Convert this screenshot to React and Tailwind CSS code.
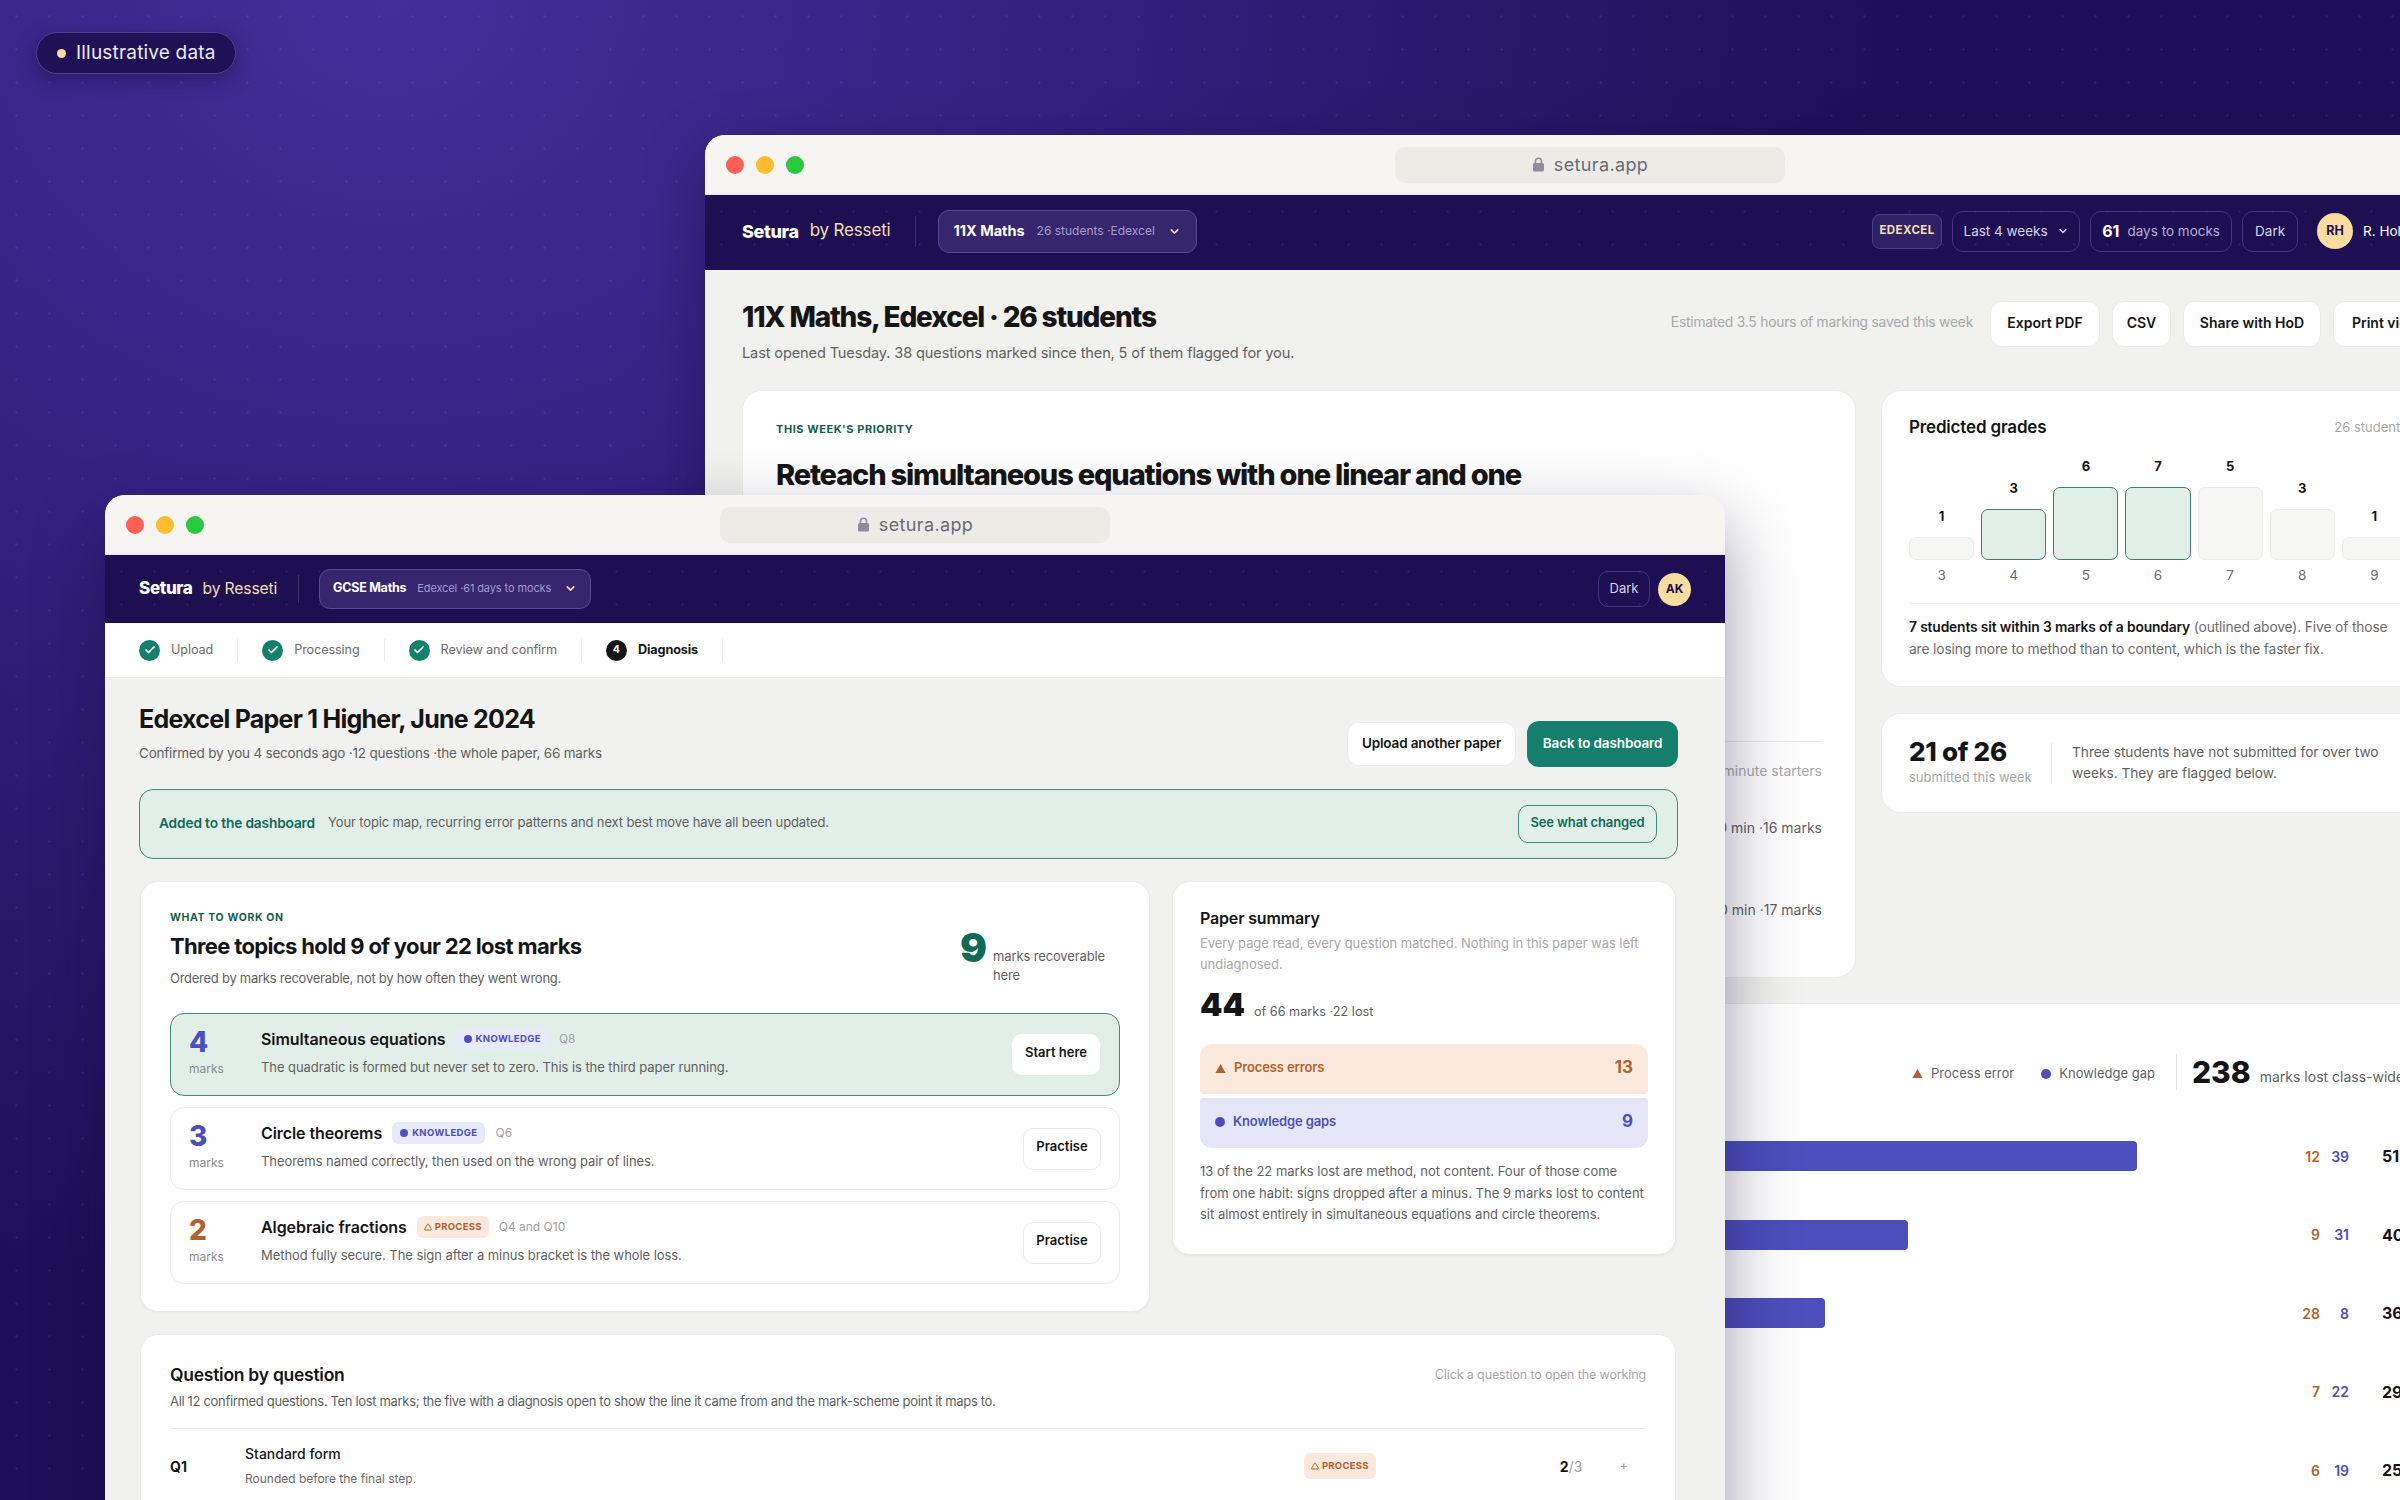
import { Check, ChevronDown, Triangle } from "lucide-react";

const grades = [
  { grade: 3, count: 1, h: "h-[23px]" },
  { grade: 4, count: 3, h: "h-[51px]", near: true },
  { grade: 5, count: 6, h: "h-[73px]", near: true },
  { grade: 6, count: 7, h: "h-[73px]", near: true },
  { grade: 7, count: 5, h: "h-[73px]" },
  { grade: 8, count: 3, h: "h-[51px]" },
  { grade: 9, count: 1, h: "h-[23px]" },
];

const lostRows = [
  { topic: "Simultaneous equations", process: 12, knowledge: 39 },
  { topic: "Circle theorems", process: 9, knowledge: 31 },
  { topic: "Algebraic fractions", process: 28, knowledge: 8 },
  { topic: "Vectors", process: 7, knowledge: 22 },
  { topic: "Standard form", process: 6, knowledge: 19 },
];

const actions = [
  { label: "Export PDF", w: "w-[110px]" },
  { label: "CSV", w: "w-[59px]" },
  { label: "Share with HoD", w: "w-[138px]" },
  { label: "Print view", w: "w-[105px]" },
];

const dots =
  "bg-[radial-gradient(rgba(255,255,255,0.06)_1px,transparent_1.5px)] bg-[size:33px_33px]";

function Lock() {
  return (
    <svg width="13" height="15" viewBox="0 0 13 15" className="shrink-0">
      <path d="M3.5 6.5V4.2a3 3 0 0 1 6 0v2.3" fill="none" stroke="#8f8d9b" strokeWidth="1.6" />
      <rect x="1" y="6" width="11" height="8.5" rx="1.6" fill="#8f8d9b" />
    </svg>
  );
}

function TitleBar() {
  return (
    <div className="relative flex h-[60px] items-center justify-center bg-[#f6f5f2] border-b border-[#e4e1ee]">
      <div className="absolute left-[21px] flex gap-[12px]">
        <span className="h-[18px] w-[18px] rounded-full bg-[#ff5f57]" />
        <span className="h-[18px] w-[18px] rounded-full bg-[#febc2e]" />
        <span className="h-[18px] w-[18px] rounded-full bg-[#28c840]" />
      </div>
      <div className="flex h-[36px] w-[390px] items-center justify-center gap-[9px] rounded-[10px] bg-[#ecebe6] text-[18px] tracking-[0.02em] text-[#6b6a75]">
        <Lock />
        <span>setura.app</span>
      </div>
    </div>
  );
}

function Triangular({ size = 12 }) {
  return (
    <svg width={size} height={size} viewBox="0 0 12 12" className="shrink-0">
      <path d="M6 1 11.5 11H.5Z" fill="#b3612c" />
    </svg>
  );
}

function KnowledgeBadge() {
  return (
    <span className="flex h-[22px] items-center gap-[4px] rounded-[6px] bg-[#e8e9fa] px-[8px] text-[9.5px] font-bold tracking-[0.04em] text-[#4c4fbb]">
      <span className="h-[8px] w-[8px] rounded-full bg-[#4c4fbb]" />
      KNOWLEDGE
    </span>
  );
}

function ProcessBadge({ className = "h-[22px]" }) {
  return (
    <span className={`flex items-center gap-[3px] rounded-[6px] bg-[#fbe9dd] px-[7px] text-[9.5px] font-bold tracking-[0.03em] text-[#b3612c] ${className}`}>
      <Triangle size={8} strokeWidth={3} />
      PROCESS
    </span>
  );
}

function BackWindow() {
  return (
    <div className="absolute left-[705px] top-[135px] h-[1400px] w-[1770px] overflow-hidden rounded-[20px] bg-[#f1f1ee] shadow-[0_20px_60px_rgba(10,5,40,0.35)]">
      <TitleBar />

      {/* Nav */}
      <div className={`flex h-[75px] items-center bg-[#1e0f52] px-[37px] pb-[3px] ${dots}`}>
        <span className="text-[18px] font-extrabold tracking-[-0.02em] text-white">Setura</span>
        <span className="ml-[11px] text-[17px] tracking-[-0.01em] text-[#f5deb3]">by Resseti</span>
        <span className="ml-[24px] h-[31px] w-px bg-white/15" />
        <button className="ml-[22px] flex h-[43px] w-[259px] items-center whitespace-nowrap rounded-[11px] border border-[#5a4a96] bg-[#35266e] px-[15px]">
          <span className="text-[14.5px] font-bold text-white">11X Maths</span>
          <span className="ml-[12px] text-[12px] text-[#a59cc9]">26 students ·Edexcel</span>
          <ChevronDown size={13} strokeWidth={3} className="ml-auto shrink-0 text-[#f5deb3]" />
        </button>
        <div className="ml-auto flex items-center gap-[10px]">
          <span className="flex h-[35px] w-[70px] items-center justify-center rounded-[8px] border border-[#4d3f8a] bg-[#2f2166] text-[11.5px] font-bold tracking-[0.04em] text-[#f5deb3]">
            EDEXCEL
          </span>
          <span className="flex h-[41px] w-[128px] items-center justify-center gap-[9px] rounded-[11px] border border-[#43357f] text-[13.5px] text-[#d8d3ea]">
            Last 4 weeks <ChevronDown size={12} strokeWidth={2.5} />
          </span>
          <span className="flex h-[41px] w-[142px] items-center justify-center gap-[8px] rounded-[11px] border border-[#43357f] text-[13.5px] text-[#b5aed4]">
            <b className="text-[16px] font-bold text-white">61</b> days to mocks
          </span>
          <span className="flex h-[41px] w-[56px] items-center justify-center rounded-[11px] border border-[#43357f] text-[13.5px] text-[#d8d3ea]">
            Dark
          </span>
          <span className="ml-[9px] flex h-[36px] w-[36px] items-center justify-center rounded-full bg-[#f8dca0] text-[12.5px] font-bold text-[#1e0f52]">
            RH
          </span>
          <span className="whitespace-nowrap text-[13.5px] text-white">R. Holloway</span>
        </div>
      </div>

      {/* Page */}
      <div className="px-[37px] pt-[28px]">
        <div className="flex items-start justify-between">
          <div>
            <h1 className="text-[28px] font-extrabold leading-[38px] tracking-[-0.042em] text-[#151515]">
              11X Maths, Edexcel · 26 students
            </h1>
            <p className="mt-[6px] text-[14.6px] leading-[22px] tracking-[-0.01em] text-[#5f5f5f]">
              Last opened Tuesday. 38 questions marked since then, 5 of them flagged for you.
            </p>
          </div>
          <div className="mt-[3px] flex items-center gap-[12px]">
            <span className="mb-[4px] mr-[5px] text-[13.8px] tracking-[-0.015em] text-[#a8a8a8]">
              Estimated 3.5 hours of marking saved this week
            </span>
            {actions.map((a) => (
              <button key={a.label} className={`h-[46px] rounded-[12px] border border-[#ebebe8] bg-white pb-[3px] text-[14px] font-semibold text-[#151515] ${a.w}`}>
                {a.label}
              </button>
            ))}
          </div>
        </div>

        <div className="mt-[26px] flex gap-[25px]">
          <div className="flex h-[588px] w-[1114px] flex-col rounded-[20px] border border-[#ebebe8] bg-white px-[33px] pb-[30px] pt-[30px]">
            <div className="text-[11px] font-bold tracking-[0.05em] text-[#155e4f]">THIS WEEK'S PRIORITY</div>
            <h2 className="mt-[17px] text-[29px] font-extrabold leading-[40px] tracking-[-0.04em] text-[#151515]">
              Reteach simultaneous equations with one linear and one
            </h2>
            <div className="mt-auto border-t border-[#ebebe8] pt-[18px] text-right text-[14px] text-[#5f5f5f]">
              <div className="text-[#a8a8a8]">Three 10-minute starters</div>
              <div className="mt-[36px]">50 min ·16 marks</div>
              <div className="mt-[61px] mb-[27px]">50 min ·17 marks</div>
            </div>
          </div>

          <div className="flex w-[554px] flex-col gap-[26px]">
            <div className="h-[297px] rounded-[20px] border border-[#ebebe8] bg-white px-[27px] pt-[24px]">
              <div className="flex items-center justify-between">
                <span className="text-[17px] font-semibold tracking-[-0.01em] text-[#151515]">Predicted grades</span>
                <span className="text-[13px] text-[#a8a8a8]">26 students</span>
              </div>
              <div className="mt-[17px] flex h-[102px] items-end gap-[7px]">
                {grades.map((g) => (
                  <div key={g.grade} className="flex w-[65.2px] flex-col items-center">
                    <span className="mb-[13px] text-[13px] font-bold leading-[16px] text-[#151515]">{g.count}</span>
                    <div className={`w-full rounded-[7px] border ${g.h} ${g.near ? "border-[#3d7f6e] bg-[#e2efe9]" : "border-[#ebebe8] bg-[#f6f6f4]"}`} />
                  </div>
                ))}
              </div>
              <div className="mt-[6px] flex gap-[7px]">
                {grades.map((g) => (
                  <span key={g.grade} className="w-[65.2px] text-center text-[13.5px] leading-[18px] text-[#6b6b6b]">{g.grade}</span>
                ))}
              </div>
              <p className="mt-[19px] border-t border-[#eeeeec] pr-[8px] pt-[12px] text-[13.8px] leading-[22px] tracking-[-0.01em] text-[#6b6b6b]">
                <b className="font-semibold text-[#151515]">7 students sit within 3 marks of a boundary</b> (outlined above). Five of those are losing more to method than to content, which is the faster fix.
              </p>
            </div>
            <div className="flex h-[100px] items-center rounded-[20px] border border-[#ebebe8] bg-white px-[27px]">
              <div className="w-[142px] pb-[3px]">
                <div className="text-[26px] font-extrabold leading-[30px] tracking-[-0.01em] text-[#151515]">21 of 26</div>
                <div className="text-[13px] leading-[20px] text-[#a8a8a8]">submitted this week</div>
              </div>
              <span className="h-[40px] w-px bg-[#e6e6e3]" />
              <p className="ml-[20px] w-[320px] text-[13.7px] leading-[21px] text-[#5f5f5f]">
                Three students have not submitted for over two weeks. They are flagged below.
              </p>
            </div>
          </div>
        </div>

        {/* Marks lost */}
        <div className="mt-[25px] h-[520px] rounded-[20px] border border-[#ebebe8] bg-white px-[28px] pt-[50px]">
          <div className="flex h-[36px] items-center whitespace-nowrap">
            <span className="ml-[1141px] mt-[3px] flex items-center gap-[8px] text-[13px] text-[#5f5f5f]">
              <Triangular size={11} /> Process error
            </span>
            <span className="ml-[27px] mt-[3px] flex items-center gap-[8px] text-[13px] text-[#5f5f5f]">
              <span className="h-[10px] w-[10px] rounded-full bg-[#4c4fbb]" /> Knowledge gap
            </span>
            <span className="ml-[21px] h-[36px] w-px bg-[#e6e6e3]" />
            <span className="ml-[15px] text-[30px] font-extrabold text-[#151515]">238</span>
            <span className="ml-[9px] mt-[8px] text-[14px] text-[#5f5f5f]">marks lost class-wide</span>
          </div>
          <div className="mt-[51px] flex flex-col gap-[48.5px]">
            {lostRows.map((row) => (
              <div key={row.topic} className="flex h-[30px] items-center">
                <span className="w-[305px] text-[14px] font-semibold text-[#151515]">{row.topic}</span>
                <div className="flex h-[30px] w-[1204px]">
                  <div className="rounded-l-[4px] bg-[#b3612c]" style={{ width: row.process * 20.8 }} />
                  <div className="rounded-r-[4px] bg-[#4c4fbb]" style={{ width: row.knowledge * 20.8 }} />
                </div>
                <span className="w-[40px] text-right text-[14px] font-semibold text-[#b3612c]">{row.process}</span>
                <span className="w-[29px] text-right text-[14px] font-semibold text-[#4c4fbb]">{row.knowledge}</span>
                <span className="ml-[33px] w-[26px] text-[16px] font-bold text-[#151515]">{row.process + row.knowledge}</span>
              </div>
            ))}
          </div>
        </div>
      </div>
    </div>
  );
}

function Step({ label, n, active }) {
  return (
    <div className="flex h-[22px] items-center border-r border-[#ebebe8] px-[24px] first:pl-0">
      {active ? (
        <span className="flex h-[21px] w-[21px] items-center justify-center rounded-full bg-[#151515] text-[10.5px] font-bold text-white">{n}</span>
      ) : (
        <span className="flex h-[21px] w-[21px] items-center justify-center rounded-full bg-[#14806c] text-white">
          <Check size={12} strokeWidth={3.5} />
        </span>
      )}
      <span className={`ml-[11px] mb-[1px] text-[12.7px] tracking-[-0.01em] ${active ? "font-bold text-[#151515]" : "text-[#6b6b6b]"}`}>{label}</span>
    </div>
  );
}

function TopicRow({ marks, colour, title, badge, ref_, desc, button, primary }) {
  return (
    <div className={`flex h-[83px] rounded-[14px] border pl-[18px] pr-[18px] ${primary ? "border-[#3d8b7d] bg-[#e2efe9]" : "border-[#ebebe8] bg-white"}`}>
      <div className="w-[72px] pt-[12px]">
        <div className={`text-[28px] font-extrabold leading-[32px] ${colour}`}>{marks}</div>
        <div className="mt-[3px] text-[12px] leading-[16px] text-[#8a8a8a]">marks</div>
      </div>
      <div className="pt-[13px]">
        <div className="flex h-[24px] items-center gap-[10px]">
          <span className="text-[16px] font-semibold tracking-[-0.005em] text-[#151515]">{title}</span>
          {badge}
          <span className="text-[12px] text-[#a0a0a0]">{ref_}</span>
        </div>
        <p className="mt-[6px] text-[13px] leading-[20px] tracking-[-0.005em] text-[#5f5f5f]">{desc}</p>
      </div>
      <button className={`ml-auto self-center rounded-[10px] bg-white pb-[3px] text-[13px] font-semibold text-[#151515] ${primary ? "mr-[1px] h-[41px] w-[88px]" : "h-[42px] w-[78px] border border-[#ebebe8]"}`}>
        {button}
      </button>
    </div>
  );
}

function FrontWindow() {
  return (
    <div className="absolute left-[105px] top-[495px] h-[1100px] w-[1620px] overflow-hidden rounded-[20px] bg-[#f1f1ef] shadow-[0_30px_70px_rgba(15,10,50,0.42)]">
      <TitleBar />

      <div className={`flex h-[68px] items-center bg-[#1e0f52] pl-[34px] pr-[34px] ${dots}`}>
        <span className="text-[17px] font-extrabold tracking-[-0.02em] text-white">Setura</span>
        <span className="ml-[10px] text-[15.7px] tracking-[-0.01em] text-[#f5deb3]">by Resseti</span>
        <span className="ml-[21px] h-[28px] w-px bg-white/15" />
        <button className="ml-[20px] flex h-[40px] w-[272px] items-center whitespace-nowrap rounded-[11px] border border-[#5a4a96] bg-[#35266e] px-[13px] pb-[1px]">
          <span className="text-[12.5px] font-bold tracking-[-0.02em] text-white">GCSE Maths</span>
          <span className="ml-[11px] text-[11px] tracking-[-0.01em] text-[#a59cc9]">Edexcel ·61 days to mocks</span>
          <ChevronDown size={13} strokeWidth={3} className="ml-auto shrink-0 text-[#f5deb3]" />
        </button>
        <span className="ml-auto flex h-[36px] w-[52px] items-center justify-center rounded-[10px] border border-[#43357f] text-[13px] text-[#d8d3ea]">
          Dark
        </span>
        <span className="ml-[8px] flex h-[33px] w-[33px] items-center justify-center rounded-full bg-[#f8dca0] text-[12px] font-bold text-[#1e0f52]">
          AK
        </span>
      </div>

      <div className="flex h-[55px] items-center border-b border-[#ebebe8] bg-white pl-[34px]">
        <Step label="Upload" />
        <Step label="Processing" />
        <Step label="Review and confirm" />
        <Step label="Diagnosis" n="4" active />
      </div>

      <div className="pl-[34px] pr-[47px] pt-[23px]">
        <div className="flex items-end justify-between">
          <div className="pb-[4px]">
            <h1 className="text-[25px] font-bold leading-[36px] tracking-[-0.03em] text-[#151515]">
              Edexcel Paper 1 Higher, June 2024
            </h1>
            <p className="mt-[6px] text-[13.5px] leading-[20px] tracking-[-0.015em] text-[#5f5f5f]">
              Confirmed by you 4 seconds ago ·12 questions ·the whole paper, 66 marks
            </p>
          </div>
          <div className="flex items-center gap-[11px]">
            <button className="h-[44px] w-[169px] rounded-[12px] border border-[#ebebe8] bg-white pb-[2px] text-[13.5px] font-semibold tracking-[-0.01em] text-[#151515]">
              Upload another paper
            </button>
            <button className="h-[46px] w-[151px] rounded-[12px] bg-[#14806c] pb-[2px] text-[13.5px] font-semibold tracking-[-0.01em] text-white">
              Back to dashboard
            </button>
          </div>
        </div>

        <div className="mt-[22px] flex h-[70px] items-center rounded-[14px] border border-[#3d8b7d] bg-[#e2efe9] pl-[19px] pr-[20px]">
          <span className="mb-[2px] text-[13.7px] font-semibold tracking-[-0.01em] text-[#0f6b58]">Added to the dashboard</span>
          <span className="mb-[2px] ml-[13px] text-[13px] tracking-[-0.01em] text-[#5f5f5f]">
            Your topic map, recurring error patterns and next best move have all been updated.
          </span>
          <button className="ml-auto h-[38px] w-[139px] rounded-[10px] border border-[#3d8b7d] pb-[2px] text-[13px] font-semibold tracking-[-0.01em] text-[#0f6b58]">
            See what changed
          </button>
        </div>

        <div className="ml-[1px] mt-[22px] flex items-start gap-[22px]">
          <div className="h-[431px] w-[1010px] rounded-[18px] border border-[#ebebe8] bg-white px-[29px] pt-[29px] shadow-[0_1px_3px_rgba(0,0,0,0.05)]">
            <div className="flex justify-between">
              <div>
                <div className="text-[10.5px] font-bold leading-[14px] tracking-[0.06em] text-[#155e4f]">WHAT TO WORK ON</div>
                <h2 className="mt-[6px] text-[22px] font-bold leading-[30px] tracking-[-0.03em] text-[#151515]">
                  Three topics hold 9 of your 22 lost marks
                </h2>
                <p className="mt-[7px] text-[13px] leading-[20px] tracking-[-0.02em] text-[#5f5f5f]">
                  Ordered by marks recoverable, not by how often they went wrong.
                </p>
              </div>
              <div className="mt-[17px] flex w-[160px] items-start gap-[6px]">
                <span className="text-[40px] font-black leading-[40px] text-[#0f6b58]">9</span>
                <span className="mt-[19px] w-[118px] text-[13px] leading-[19px] tracking-[-0.01em] text-[#5f5f5f]">marks recoverable here</span>
              </div>
            </div>
            <div className="mt-[25px] flex flex-col gap-[11px]">
              <TopicRow primary marks="4" colour="text-[#4c4fbb]" title="Simultaneous equations" badge={<KnowledgeBadge />} ref_="Q8"
                desc="The quadratic is formed but never set to zero. This is the third paper running." button="Start here" />
              <TopicRow marks="3" colour="text-[#4c4fbb]" title="Circle theorems" badge={<KnowledgeBadge />} ref_="Q6"
                desc="Theorems named correctly, then used on the wrong pair of lines." button="Practise" />
              <TopicRow marks="2" colour="text-[#b3612c]" title="Algebraic fractions" badge={<ProcessBadge />} ref_="Q4 and Q10"
                desc="Method fully secure. The sign after a minus bracket is the whole loss." button="Practise" />
            </div>
          </div>

          <div className="h-[374px] w-[504px] rounded-[18px] border border-[#ebebe8] bg-white px-[27px] pt-[24px] shadow-[0_1px_3px_rgba(0,0,0,0.05)]">
            <div className="text-[16px] font-semibold leading-[24px] tracking-[-0.01em] text-[#151515]">Paper summary</div>
            <p className="mt-[3px] text-[13px] leading-[21px] tracking-[-0.005em] text-[#a8a8a8]">
              Every page read, every question matched. Nothing in this paper was left undiagnosed.
            </p>
            <div className="mt-[10px] flex items-baseline gap-[9px]">
              <span className="text-[32px] font-black leading-[40px] text-[#151515]">44</span>
              <span className="text-[12.7px] text-[#5f5f5f]">of 66 marks ·22 lost</span>
            </div>
            <div className="mt-[19px] flex h-[50px] items-center rounded-t-[12px] rounded-b-[3px] bg-[#fbe9dd] px-[15px] pb-[2px] text-[#b3612c]">
              <Triangular size={11} />
              <span className="ml-[8px] text-[13px] font-semibold tracking-[-0.01em]">Process errors</span>
              <span className="ml-auto text-[17px] font-bold">13</span>
            </div>
            <div className="mt-[4px] flex h-[50px] items-center rounded-b-[12px] rounded-t-[3px] bg-[#e5e7f8] px-[15px] pb-[2px] text-[#4c4fbb]">
              <span className="h-[10px] w-[10px] rounded-full bg-[#4c4fbb]" />
              <span className="ml-[8px] text-[13px] font-semibold tracking-[-0.01em]">Knowledge gaps</span>
              <span className="ml-auto text-[17px] font-bold">9</span>
            </div>
            <p className="mt-[13px] text-[13px] leading-[21.5px] text-[#5f5f5f]">
              13 of the 22 marks lost are method, not content. Four of those come from one habit: signs dropped after a minus. The 9 marks lost to content sit almost entirely in simultaneous equations and circle theorems.
            </p>
          </div>
        </div>

        <div className="ml-[1px] mt-[22px] h-[400px] w-[1536px] rounded-[18px] border border-[#ebebe8] bg-white px-[29px] pt-[27px]">
          <div className="flex items-center justify-between">
            <span className="text-[17.5px] font-semibold leading-[26px] tracking-[-0.015em] text-[#151515]">Question by question</span>
            <span className="text-[12.5px] tracking-[-0.01em] text-[#a8a8a8]">Click a question to open the working</span>
          </div>
          <p className="mt-[3px] text-[13px] leading-[20px] tracking-[-0.025em] text-[#5f5f5f]">
            All 12 confirmed questions. Ten lost marks; the five with a diagnosis open to show the line it came from and the mark-scheme point it maps to.
          </p>
          <div className="mt-[17px] flex h-[75px] items-center border-t border-[#ebebe8]">
            <span className="w-[75px] text-[14px] font-bold text-[#151515]">Q1</span>
            <div>
              <div className="text-[14px] font-medium leading-[20px] text-[#151515]">Standard form</div>
              <div className="mt-[6px] text-[12px] leading-[18px] text-[#6b6b6b]">Rounded before the final step.</div>
            </div>
            <ProcessBadge className="ml-auto h-[26px]" />
            <span className="ml-[184px] text-[14px] font-bold text-[#151515]">
              2<span className="font-normal text-[#a0a0a0]">/3</span>
            </span>
            <span className="ml-[37px] mr-[18px] text-[13px] text-[#a0a0a0]">+</span>
          </div>
        </div>
      </div>
    </div>
  );
}

export default function App() {
  return (
    <div className="relative h-[1500px] w-[2400px] overflow-hidden bg-[radial-gradient(ellipse_1500px_1300px_at_390px_0px,#432f98_0%,#33217f_45%,#1e1058_100%)] [font-family:Inter,sans-serif]">
      <div className={`absolute inset-0 ${dots}`} />
      <div className="absolute left-[36px] top-[32px] flex h-[42px] w-[200px] items-center rounded-full border border-[#4d4195] bg-[#1e1155] pl-[20px] shadow-[0_6px_20px_rgba(10,5,40,0.35)]">
        <span className="h-[9px] w-[9px] rounded-full bg-[#f8dca0]" />
        <span className="ml-[10px] mt-[1px] whitespace-nowrap text-[19px] tracking-[0.01em] text-[#ece9f6]">Illustrative data</span>
      </div>
      <BackWindow />
      <FrontWindow />
    </div>
  );
}
